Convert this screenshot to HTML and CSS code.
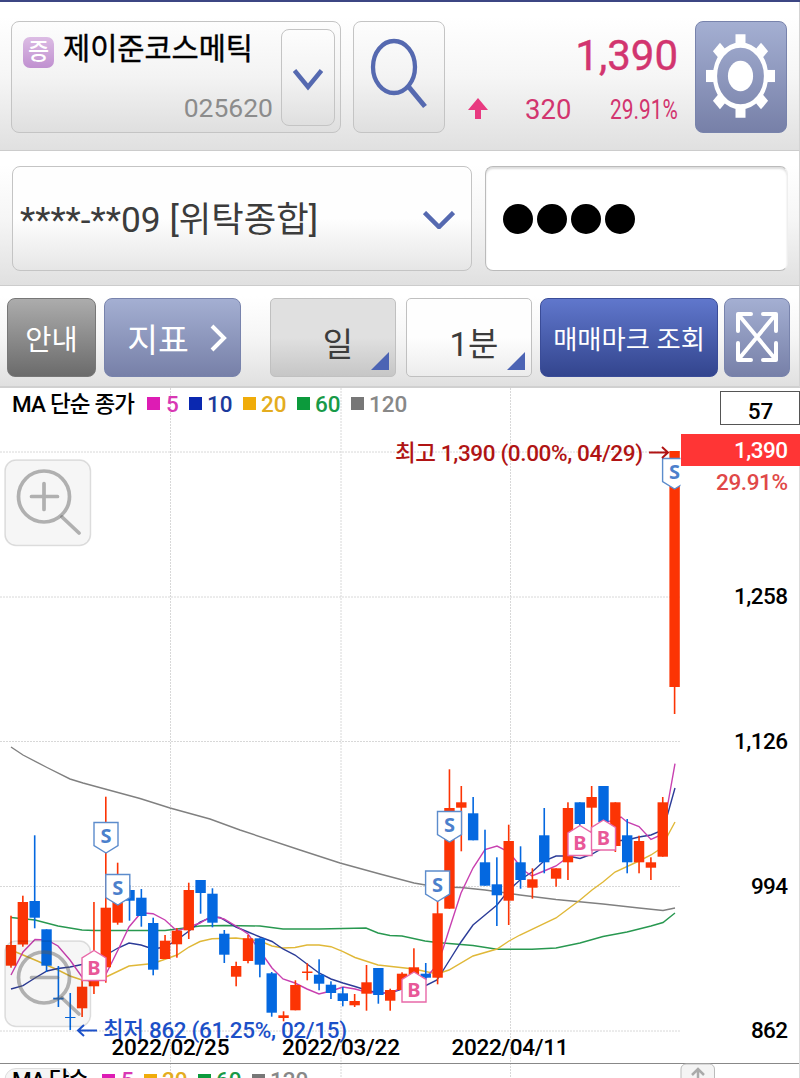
FILE: index.html
```html
<!DOCTYPE html>
<html lang="ko">
<head>
    <meta charset="UTF-8">
    <meta name="viewport" content="width=device-width, initial-scale=1.0">
    <title>제이준코스메틱</title>
    <link rel="stylesheet" href="styles.css">
</head>
<body>
    <div id="container">
        <div class="bar stockbar">
            <div class="stock box">
                <span class="badge">증</span>
                <div class="stockname">
                    <div class="name">제이준코스메틱</div>
                    <div class="code">025620</div>
                </div>
                <button class="drop box">
                    <svg width="30" height="22" viewBox="0 0 30 22"><path d="M1.5 1.5L15 18L28.5 1.5" fill="none" stroke="#5569b0" stroke-width="4.5"/></svg>
                </button>
            </div>
            <button class="search box">
                <svg width="58" height="78" viewBox="0 -3 58 78">
                    <ellipse cx="24" cy="26" rx="21" ry="26" fill="none" stroke="#5569b0" stroke-width="4.3"/>
                    <path d="M38 45L55 65.5" stroke="#5569b0" stroke-width="5"/>
                </svg>
            </button>
            <div class="price">
                <div class="now">1,390</div>
                <div class="change">
                    <svg width="20" height="22" viewBox="0 0 20 22"><path d="M10 0L20 12H13V21H7V12H0Z" fill="#e83a80"/></svg>
                    <span class="diff">320</span>
                    <span class="rate"><span>29.91%</span></span>
                </div>
            </div>
            <button class="setting blue">
                <svg width="69" height="84" viewBox="-34.5 -42 69 84">
                    <g transform="scale(1 1.21)" fill="#fff">
                        <rect x="-5" y="-34.5" width="10" height="10"/>
                        <rect x="-5" y="24.5" width="10" height="10"/>
                        <rect x="-34.5" y="-5" width="10" height="10"/>
                        <rect x="24.5" y="-5" width="10" height="10"/>
                        <g transform="rotate(45)">
                            <rect x="-5" y="-34" width="10" height="10"/>
                            <rect x="-5" y="24" width="10" height="10"/>
                            <rect x="-34" y="-5" width="10" height="10"/>
                            <rect x="24" y="-5" width="10" height="10"/>
                        </g>
                        <circle r="25.5" fill="none" stroke="#fff" stroke-width="4.2"/>
                        <circle r="12.6"/>
                    </g>
                </svg>
            </button>
        </div>

        <div class="bar accountbar">
            <div class="account box">
                <span>****-**09 [위탁종합]</span>
                <svg width="32" height="18" viewBox="0 0 32 18"><path d="M1.5 1.5L16 16L30.5 1.5" fill="none" stroke="#5569b0" stroke-width="4.5"/></svg>
            </div>
            <div class="password">
                <i></i><i></i><i></i><i></i>
            </div>
        </div>

        <div class="bar toolbar">
            <button class="guide">안내</button>
            <button class="indicator blue">지표
                <svg width="18" height="28" viewBox="0 0 18 28"><path d="M2 2L14 14L2 26" fill="none" stroke="#fff" stroke-width="4"/></svg>
            </button>
            <button class="period day">일</button>
            <button class="period minute">1분</button>
            <button class="mark">매매마크 조회</button>
            <button class="full blue">
                <svg width="44" height="52" viewBox="0 0 44 52" fill="none" stroke="#fff" stroke-width="4">
                    <path d="M3 3L41 49M41 3L3 49"/>
                    <path d="M3 20V3H16M28 3H41V20M41 32V49H28M16 49H3V32" stroke-linecap="round" stroke-linejoin="round"/>
                </svg>
            </button>
        </div>

        <svg id="chart" width="800" height="690" viewBox="0 388 800 690">
            <g id="grid"></g>
            <g id="lines"></g>
            <g id="candles"></g>

            <g class="zoomin">
                <rect x="5" y="460" width="85.5" height="85.5" rx="11"/>
                <circle cx="44" cy="496.5" r="25.5"/>
                <path d="M31.5 496.5H57.5M44 483.5V509.5M62 517L79 533"/>
            </g>
            <g class="zoomout">
                <rect x="5" y="941" width="85.5" height="85.5" rx="11"/>
                <circle cx="44" cy="977.5" r="25.5"/>
                <path d="M31.5 977.5H57.5M62 998L79 1014"/>
            </g>
            <g id="marks"></g>

            <!-- legend -->
            <text x="12" y="412" textLength="123">MA 단순 종가</text>
            <rect x="147" y="397" width="13" height="13" fill="#dd1cb4"/>
            <text x="166" y="412" class="ma5">5</text>
            <rect x="189" y="397" width="13" height="13" fill="#0a28b0"/>
            <text x="207" y="412" class="ma10">10</text>
            <rect x="243" y="397" width="13" height="13" fill="#f0ac0a"/>
            <text x="261" y="412" class="ma20">20</text>
            <rect x="297" y="397" width="13" height="13" fill="#0c9a3c"/>
            <text x="315" y="412" class="ma60">60</text>
            <rect x="351" y="397" width="13" height="13" fill="#777"/>
            <text x="369" y="412" class="ma120">120</text>

            <!-- price axis -->
            <rect x="720.5" y="391.5" width="79" height="33" fill="#fff" stroke="#555"/>
            <text x="760.5" y="419" text-anchor="middle">57</text>
            <rect x="681" y="434" width="119" height="32" fill="#ff3535"/>
            <text x="788" y="458" class="end" textLength="54" fill="#fff">1,390</text>
            <text x="788" y="490" class="end" textLength="72" fill="#e04848">29.91%</text>
            <text x="788" y="604" class="end" textLength="54">1,258</text>
            <text x="788" y="748.5" class="end" textLength="54">1,126</text>
            <text x="788" y="893.5" class="end" textLength="37">994</text>
            <text x="788" y="1038" class="end" textLength="37">862</text>

            <text x="395" y="460.5" textLength="248" fill="#b01414">최고 1,390 (0.00%, 04/29)</text>
            <path d="M649 452.5H668M662 447L668 452.5L662 458" fill="none" stroke="#b01414" stroke-width="2"/>
            <path d="M97 1030.5H78M84 1025L78 1030.5L84 1036" fill="none" stroke="#1c50c8" stroke-width="2"/>
            <text x="103" y="1038" textLength="244" fill="#1c50c8">최저 862 (61.25%, 02/15)</text>

            <text x="111.5" y="1055" textLength="118">2022/02/25</text>
            <text x="282" y="1055" textLength="118">2022/03/22</text>
            <text x="451.5" y="1055" textLength="117">2022/04/11</text>

            <!-- next panel -->
            <path d="M0 1063.5H800" stroke="#888"/>
            <rect x="5" y="1068.5" width="66" height="40" rx="11" fill="#f5f5f5" stroke="#ddd"/>
            <text x="12" y="1088" textLength="77">MA 단순</text>
            <rect x="102" y="1074" width="13" height="13" fill="#dd1cb4"/>
            <text x="121" y="1088" class="ma5">5</text>
            <rect x="144" y="1074" width="13" height="13" fill="#f0ac0a"/>
            <text x="162" y="1088" class="ma20">20</text>
            <rect x="198" y="1074" width="13" height="13" fill="#0c9a3c"/>
            <text x="216" y="1088" class="ma60">60</text>
            <rect x="252" y="1074" width="13" height="13" fill="#777"/>
            <text x="270" y="1088" class="ma120">120</text>
            <rect x="681" y="1064" width="33.5" height="40" rx="5" fill="#f4f4f4" stroke="#bbb"/>
            <path d="M698 1082V1069M692 1075L698 1069L704 1075" fill="none" stroke="#aaa" stroke-width="2.5"/>
            <path d="M799.5 466V1078" stroke="#ddd"/>
        </svg>
    </div>
    <script src="chart.js"></script>
</body>
</html>
```

FILE: styles.css
```css
*{
    box-sizing: border-box;
}
body{
    margin: 0;
    font-family: Roboto, "Noto Sans CJK KR", sans-serif;
    background: #fff;
}
#container{
    width: 800px;
    height: 1078px;
    overflow: hidden;
    border-top: 2px solid #3c4683;
}
button{
    font-family: inherit;
    padding: 0;
    border: none;
    display: flex;
    align-items: center;
    justify-content: center;
}
svg{
    display: block;
    flex: none;
}
.bar{
    display: flex;
    background: linear-gradient(#fff 10%, #f6f6f6 50%, #e0e0e0);
    border-right: 1px solid #d4d4d4;
    border-bottom: 1px solid #ccc;
}
.box{
    border: 1px solid #c4c4c4;
    border-radius: 8px;
    background: linear-gradient(#fdfdfd, #f3f3f3 50%, #dfdfdf);
}
.blue{
    background: linear-gradient(#a4afd2, #7780a8);
    border: 1px solid #7883ac;
    border-radius: 8px;
}

/* stock */
.stockbar{
    height: 149px;
    padding: 19px 12px 17px 11px;
}
.stock{
    width: 330px;
    height: 112px;
    display: flex;
    padding: 7px 5px 0 11px;
}
.badge{
    width: 31px;
    height: 31px;
    margin-top: 8px;
    border-radius: 7px;
    background: linear-gradient(#dcbce4, #c090d0);
    color: #fff;
    font-size: 23px;
    font-weight: 500;
    line-height: 30px;
    text-align: center;
}
.stockname{
    width: 227px;
    padding-left: 9px;
}
.name{
    font-size: 29.5px;
    line-height: 40px;
    height: 61px;
    white-space: nowrap;
    -webkit-text-stroke: 0.4px #000;
}
.code{
    font-size: 26.5px;
    line-height: 36px;
    text-align: right;
    padding-right: 8px;
    color: #8c8c8c;
}
.drop{
    width: 54px;
    height: 97px;
    padding-top: 5px;
}
.search{
    width: 92px;
    height: 112px;
    margin-left: 12px;
}
.price{
    width: 233px;
    color: #d2356f;
}
.now{
    font-size: 42px;
    line-height: 50px;
    padding-top: 10px;
    text-align: right;
    -webkit-text-stroke: 0.4px #d2356f;
}
.change{
    display: flex;
    align-items: center;
    height: 56px;
    padding-left: 23px;
    font-size: 27.5px;
}
.diff{
    margin-left: 37px;
}
.rate{
    margin-left: auto;
    width: 68px;
}
.rate span{
    display: inline-block;
    transform: scaleX(0.76);
    transform-origin: left;
}
.setting{
    width: 92px;
    height: 112px;
    margin-left: 17px;
    padding: 0 1px 3px 0;
}

/* account */
.accountbar{
    height: 135px;
    padding: 15px 11px 15px 12px;
}
.account{
    width: 460px;
    flex: none;
    height: 105px;
    display: flex;
    align-items: center;
    justify-content: space-between;
    padding: 2px 16px 0 7px;
    font-size: 35.3px;
    color: #3c3c3c;
    background: linear-gradient(#fefefe 50%, #e6e6e6);
}
.account span{
    padding-bottom: 6px;
}
.password{
    width: 303px;
    height: 105px;
    margin-left: 13px;
    display: flex;
    align-items: center;
    gap: 4px;
    padding: 1px 0 0 17px;
    border: 1px solid #bbb;
    border-right-color: #eee;
    border-radius: 8px;
    background: #fff;
    box-shadow: inset 0 2px 2px #ddd;
}
.password i{
    width: 30px;
    height: 30px;
    border-radius: 50%;
    background: #000;
}

/* toolbar */
.toolbar{
    height: 102px;
    padding: 12px 0 0 7px;
    border-bottom: 2px solid #d0d0d0;
}
.toolbar button{
    height: 79px;
    color: #fff;
}
.toolbar .guide{
    width: 89px;
    font-size: 28.5px;
    border: 1px solid #777;
    border-radius: 8px;
    background: linear-gradient(#acacac, #6b6b6b);
}
.toolbar .indicator{
    width: 137px;
    margin-left: 8px;
    gap: 21px;
    padding-left: 10px;
    font-size: 33.5px;
}
.toolbar .period{
    position: relative;
    width: 126px;
    font-size: 33px;
    color: #3c3c3c;
    border: 1px solid #c0c0c0;
    border-radius: 5px;
    padding: 9px 0 0 10px;
}
.period::after{
    content: "";
    position: absolute;
    right: 6px;
    bottom: 6px;
    border-left: 18px solid transparent;
    border-bottom: 18px solid #4c64b4;
}
.toolbar .day{
    margin-left: 29px;
    background: linear-gradient(#e0e0e0 50%, #c6c6c6);
}
.toolbar .minute{
    margin-left: 10px;
    background: linear-gradient(#fefefe 50%, #ececec);
}
.toolbar .mark{
    width: 178px;
    margin-left: 8px;
    padding-bottom: 1px;
    font-size: 26.3px;
    border-radius: 8px;
    border: 1px solid #3a4c98;
    background: linear-gradient(#6077cc, #33458e);
}
.toolbar .full{
    width: 66px;
    margin-left: 6px;
    padding: 0 1px 1px 0;
}

/* chart */
#chart text{
    font-size: 22.5px;
    font-weight: 500;
}
#chart .end{
    text-anchor: end;
}
#chart .ma5{ fill: #d838b4; }
#chart .ma10{ fill: #1c3a9c; }
#chart .ma20{ fill: #e4ac20; }
#chart .ma60{ fill: #189a48; }
#chart .ma120{ fill: #888; }
#grid path{
    stroke: #d8d8d8;
    stroke-dasharray: 2 1;
}
#lines polyline{
    fill: none;
    stroke-width: 1.4;
}
.zoomin rect, .zoomout rect{
    fill: rgba(0,0,0,0.035);
    stroke: rgba(0,0,0,0.12);
    stroke-width: 1.5;
}
.zoomin circle, .zoomout circle, .zoomin path, .zoomout path{
    fill: none;
    stroke: rgba(90,90,90,0.45);
    stroke-width: 3.7;
    stroke-linecap: round;
}
#chart #marks text{
    font-family: "Noto Sans", sans-serif;
    font-size: 20px;
    font-weight: 700;
    text-anchor: middle;
}
```

FILE: chart.js
```js
const RED = '#fc3404';
const BLUE = '#0468e0';
const START = 11;
const STEP = 11.85;

// color, high, body top, body bottom, low
const candles = [
    ['r',915.7,945,965.7,967.7], ['r',895.7,902,944.5,946.7], ['b',835.3,901,917.7,928.3],
    ['b',929.3,929.3,965.7,972], ['b',966,997.7,999.5,1007], ['b',993,1017,1018,1030],
    ['r',980,986.7,1008.3,1017], ['r',902,976,986.3,994], ['r',796.7,907.7,967.3,982.7],
    ['r',862.7,897,922.7,924.7], ['b',885,890,900.7,920.7], ['b',889,897.7,916,926.7],
    ['b',917.7,923,969.7,975.3], ['r',935,940.7,959,959], ['r',928,930.7,944.3,957.7],
    ['r',882.7,890,930.3,939], ['b',880,880,893,913.7], ['b',888.3,893.7,922.7,927.3],
    ['b',930,933.7,954.7,963], ['r',961.7,966,976.7,986.3], ['r',935,938.3,961,963.3],
    ['b',938.3,938.3,964.7,977.3], ['b',972,973.3,1012.7,1016.7], ['r',1011.3,1015.3,1018,1021.3],
    ['r',980.3,985,1010.3,1010.3], ['r',963.3,971.5,973,980.3], ['b',959.3,974.7,983.7,990.3],
    ['b',981.3,984.7,993,999], ['b',987,993.3,1001,1006.3], ['r',994,1001,1005.3,1007],
    ['r',965,982.3,993.7,1010.7], ['b',968,968,995,1003.7], ['r',988.7,990,1000.7,1010.7],
    ['r',972.3,973.7,990,990], ['r',948.3,967.3,978,978], ['b',963,973.7,977.7,980],
    ['r',895,913.3,977.7,984.3], ['r',769.3,808,908.7,908.7], ['r',786,802.3,807.7,851.3],
    ['b',797,813.3,840.3,840.3], ['b',829.7,862.3,885.7,885.7], ['b',857.3,884.3,895.3,926],
    ['r',824.7,841,900.7,925], ['b',846.3,862.3,880,888.7], ['r',868.3,879.3,887.7,898.7],
    ['b',808,835.3,862.3,873.3], ['r',868.3,868.3,878.7,886.7], ['r',802.3,808,862.3,880],
    ['b',802.3,802.3,824,830], ['r',786,797,807.7,835], ['b',786,786,822,830],
    ['r',802.3,802.3,846,852], ['b',819,835.3,862.3,873.3], ['r',835.7,841,862.3,873.3],
    ['r',857.3,862.3,867.7,880], ['r',797,802.3,856.7,856.7], ['r',451,451,687,714]
];

const lines = {
    '#808080': '11,747 23,755 47,767.5 70,779 83,783 105,789 140,798.5 170,808 210,819 240,830 300,850 340,863 380,874 414,883 437,887 461,887.5 485,890 520,895 556,899.5 603,904 639,908 663,910.5 675,908',
    '#289850': '11,917.5 35,920 58,926 82,930 94,930.5 165,930.5 177,929 200,926 224,925.5 260,926 283,929 319,929 366,928 378,933 390,935.5 402,936 425,941 437,942.5 473,945.5 497,949.3 532,949.3 556,948 580,943 603,936.5 627,932 651,926 663,922.5 675,913',
    '#e0b838': '11,950 35,960 58,970 70,976 82,980 94,981 106,977 129,966 153,963.5 177,955 189,947 200,941.5 212,938.7 236,938 260,941 272,946 283,948 295,947.5 307,945 319,945 331,946.7 343,951.7 355,957.5 378,965 414,969 437,974 449,970 473,956 497,949 509,941 520,935 556,918 568,909 580,900 592,890 603,882 615,872 639,861 651,855 663,847 668,835 675,822',
    '#2c3c98': '11,989 23,985.7 35,978 47,971 58,968.5 70,967 82,964.5 94,963 106,955 118,948 129,943 141,945 153,949 165,947 177,940 189,931 200,922 212,917 220,917.5 236,927 248,932 260,937 272,941.5 283,949 295,955 307,964 319,973 331,979 343,983 355,986.5 366,990 378,993 390,993 402,989 414,985 425,986 437,980 449,961 461,942 473,925 485,915 497,905 509,890 520,880 532,872 544,861 556,856 568,856 580,858.5 592,854 603,848 615,841 627,840 639,837 651,835 663,830 668,813 675,788',
    '#c840b0': '11,975 23,952 35,939.5 47,940 58,946 70,960 82,977 94,984 106,974 118,950 129,927 141,912.7 153,913.7 165,920 177,931 189,927 200,923 212,916 224,919 236,926 248,934 260,951 272,968 283,979 295,983 307,989 319,994 331,991 343,987 355,989 366,992 378,993 390,993 402,988 414,980 425,979 437,965 443,949 449,930 461,893 473,868 485,849.7 497,846 509,852 520,866 526,872 532,876 544,871 556,866 568,857 580,852 592,830 603,823 615,820 621,817 627,822 639,826.5 651,839.5 663,834 668,803 675,763.7'
};

// type, x, top of the flag
const marks = [
    ['S',106,822.5], ['S',117.8,874.5], ['S',437.6,871], ['S',449.5,811.5], ['S',674.6,458.5],
    ['B',94,950.5], ['B',414,972], ['B',580,825.5], ['B',603.5,820]
];

let html = '';
[452, 597, 741.5, 886.5, 1031].forEach(y => {
    html += `<path d="M0 ${y}H681"/>`;
});
[170.5, 341, 510.5].forEach(x => {
    html += `<path d="M${x} 388V1078"/>`;
});
document.querySelector('#grid').innerHTML = html;

html = '';
for (const color in lines) {
    html += `<polyline points="${lines[color]}" stroke="${color}"/>`;
}
document.querySelector('#lines').innerHTML = html;

html = '';
candles.forEach((c, i) => {
    const x = START + STEP * i;
    const color = c[0] == 'r' ? RED : BLUE;
    html += `<rect x="${x - 0.8}" y="${c[1]}" width="1.6" height="${c[4] - c[1]}" fill="${color}"/>`;
    html += `<rect x="${x - 5.2}" y="${c[2]}" width="10.4" height="${c[3] - c[2]}" fill="${color}"/>`;
});
document.querySelector('#candles').innerHTML = html;

html = '';
marks.forEach(m => {
    const [type, x, y] = m;
    if (type == 'S') {
        html += `<path d="M${x - 12} ${y}H${x + 12}V${y + 23}L${x} ${y + 30.5}L${x - 12} ${y + 23}Z" fill="#fff" stroke="#5c8ccc" stroke-width="1.4"/>`;
        html += `<text x="${x}" y="${y + 20.5}" fill="#4c80cc">S</text>`;
    } else {
        html += `<path d="M${x} ${y}L${x + 12} ${y + 7.5}V${y + 30}H${x - 12}V${y + 7.5}Z" fill="#fff" stroke="#e868a8" stroke-width="1.4"/>`;
        html += `<text x="${x}" y="${y + 24.5}" fill="#e85898">B</text>`;
    }
});
// price column hides the part of a flag past the plot
html += '<rect x="680.5" y="426" width="118" height="70" fill="#fff"/>';
document.querySelector('#marks').innerHTML = html;
```
